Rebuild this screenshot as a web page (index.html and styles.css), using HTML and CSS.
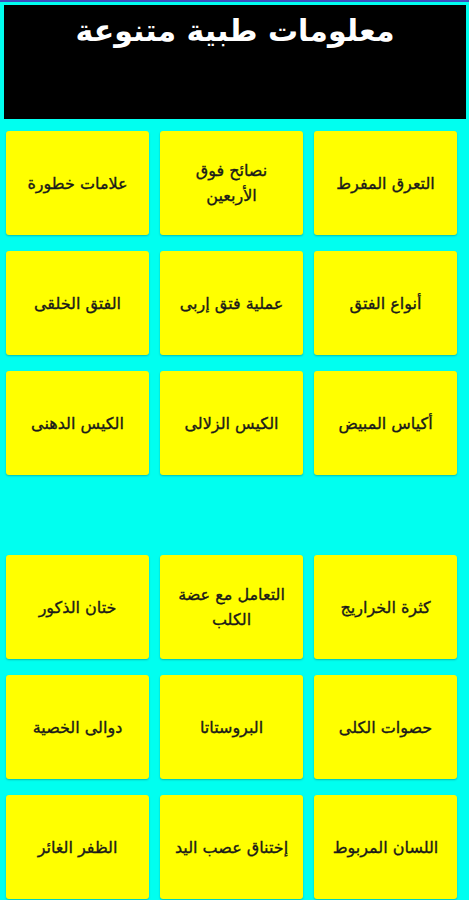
FILE: index.html
```html
<!DOCTYPE html>
<html lang="ar">
<head>
<meta charset="utf-8">
<link rel="stylesheet" href="styles.css">
</head>
<body>
<div class="topbar"></div>
<header class="header">
  <h1 class="title">معلومات طبية متنوعة</h1>
</header>
<main class="grid" dir="rtl">
  <div class="card">التعرق المفرط</div>
  <div class="card">نصائح فوق الأربعين</div>
  <div class="card">علامات خطورة</div>
  <div class="card">أنواع الفتق</div>
  <div class="card">عملية فتق إربى</div>
  <div class="card">الفتق الخلقى</div>
  <div class="card">أكياس المبيض</div>
  <div class="card">الكيس الزلالى</div>
  <div class="card">الكيس الدهنى</div>
</main>
<div class="spacer"></div>
<section class="grid" dir="rtl">
  <div class="card">كثرة الخراريج</div>
  <div class="card">التعامل مع عضة الكلب</div>
  <div class="card">ختان الذكور</div>
  <div class="card">حصوات الكلى</div>
  <div class="card">البروستاتا</div>
  <div class="card">دوالى الخصية</div>
  <div class="card">اللسان المربوط</div>
  <div class="card">إختناق عصب اليد</div>
  <div class="card">الظفر الغائر</div>
</section>
</body>
</html>
```
FILE: styles.css
```css
html, body {
  margin: 0;
  padding: 0;
}
body {
  background: #00fff0;
  font-family: "DejaVu Sans", "Noto Sans", sans-serif;
  height: 900px;
  overflow: hidden;
}
.topbar {
  height: 2px;
  background: #3f4fc0;
}
.header {
  margin: 3px 3px 0 4px;
  height: 114px;
  background: #000;
}
.title {
  margin: 0;
  padding-top: 6px;
  color: #fff;
  font-size: 30px;
  font-weight: bold;
  text-align: center;
  line-height: 40px;
}
.grid {
  display: grid;
  grid-template-columns: repeat(3, 143px);
  grid-auto-rows: 104px;
  column-gap: 11px;
  row-gap: 16px;
  padding-left: 6px;
  padding-right: 12px;
  margin-top: 12px;
}
.spacer {
  height: 68px;
}
.card {
  background: #ffff00;
  border-radius: 3px;
  box-shadow: 0 1px 2px rgba(0, 0, 0, 0.25);
  display: flex;
  align-items: center;
  justify-content: center;
  text-align: center;
  padding: 0 10px;
  font-size: 16px;
  font-weight: normal;
  line-height: 25px;
  color: #1a1a1a;
  -webkit-text-stroke: 0.35px #1a1a1a;
}
```
